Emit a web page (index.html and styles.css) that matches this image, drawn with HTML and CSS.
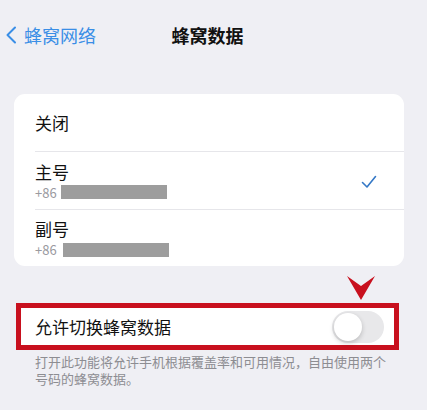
FILE: index.html
```html
<!DOCTYPE html>
<html lang="zh-CN">
<head>
    <meta charset="UTF-8">
    <meta name="viewport" content="width=device-width, initial-scale=1.0">
    <title>蜂窝数据</title>
    <link rel="stylesheet" href="styles.css">
</head>
<body>

    <div class="navbar">
        <a class="back" href="#">
            <svg class="back-icon" width="12" height="18" viewBox="0 0 12 18">
                <path d="M10 1.5 L2.5 9 L10 16.5" fill="none" stroke="#3a8ee6" stroke-width="2" stroke-linecap="round" stroke-linejoin="round"/>
            </svg>
            <span>蜂窝网络</span>
        </a>
        <div class="title">蜂窝数据</div>
        <div></div>
    </div>

    <div class="card">
        <div class="row row-single">关闭</div>
        <div class="row row-double">
            <div class="line-info">
                <div class="line-name">主号</div>
                <div class="line-num">+86 <span class="mask mask-a"></span></div>
            </div>
            <svg class="check" width="16" height="14" viewBox="0 0 16 14">
                <path d="M1.5 7.5 L6 12 L14.5 1.5" fill="none" stroke="#3478c6" stroke-width="1.6" stroke-linecap="round" stroke-linejoin="round"/>
            </svg>
        </div>
        <div class="row row-double">
            <div class="line-info">
                <div class="line-name">副号</div>
                <div class="line-num">+86 <span class="mask mask-b"></span></div>
            </div>
        </div>
    </div>

    <div class="switch-wrap">
        <svg class="marker" width="28" height="24" viewBox="0 0 28 24">
            <path d="M0 0 L14 10 L28 0 L14 24 Z" fill="#c8101e"/>
        </svg>
        <div class="switch-row">
            <span>允许切换蜂窝数据</span>
            <div class="toggle"><div class="knob"></div></div>
        </div>
    </div>

    <p class="note">打开此功能将允许手机根据覆盖率和可用情况，自由使用两个号码的蜂窝数据。</p>

</body>
</html>
```

FILE: styles.css
```css
* { box-sizing: border-box; }

body {
    margin: 0;
    background: #efeff4;
    font-family: "Noto Sans CJK SC", "Noto Sans", sans-serif;
    color: #111;
    width: 427px;
    height: 410px;
    overflow: hidden;
}

.navbar {
    display: grid;
    grid-template-columns: 1fr auto 1fr;
    align-items: center;
    height: 70px;
    padding: 0 0 0 5px;
}

.back {
    display: flex;
    align-items: center;
    gap: 7px;
    color: #3a8ee6;
    text-decoration: none;
    font-size: 18px;
}

.title {
    font-size: 18px;
    font-weight: bold;
    margin-left: -17px;
}

.card {
    margin: 24px 23px 0 14px;
    background: #fff;
    border-radius: 11px;
    overflow: hidden;
}

.row {
    display: flex;
    align-items: center;
    justify-content: space-between;
    margin-left: 21px;
    padding-right: 27px;
    font-size: 17px;
}

.row-single {
    height: 58px;
    border-bottom: 1px solid #e6e6ea;
}

.row-double {
    height: 57px;
}

.row-double + .row-double {
    border-top: 1px solid #e6e6ea;
}

.line-name {
    line-height: 20px;
    margin: 1px 0 2px;
}

.line-num {
    display: flex;
    align-items: center;
    gap: 4px;
    font-size: 13px;
    color: #9a9a9f;
    line-height: 17px;
}

.mask {
    display: inline-block;
    height: 14px;
    background: #9d9d9d;
}
.mask-a { width: 106px; }
.mask-b { width: 106px; margin-left: 2px; }

.check { margin-top: 2px; }

.switch-wrap {
    position: relative;
    margin: 37px 28px 0 16px;
}

.marker {
    position: absolute;
    right: 24px;
    top: -27px;
}

.switch-row {
    display: flex;
    align-items: center;
    justify-content: space-between;
    height: 47px;
    background: #fff;
    border: 5px solid #c8101e;
    padding: 0 10px 0 14px;
    font-size: 17px;
}

.toggle {
    width: 52px;
    height: 32px;
    border-radius: 16px;
    background: #e8e8ea;
    padding: 2px;
}

.knob {
    width: 28px;
    height: 28px;
    border-radius: 50%;
    background: #fff;
    box-shadow: 0 2px 5px rgba(0,0,0,0.2);
}

.note {
    margin: 3px 40px 0 35px;
    font-size: 13px;
    line-height: 17px;
    color: #8d8d92;
}
```
